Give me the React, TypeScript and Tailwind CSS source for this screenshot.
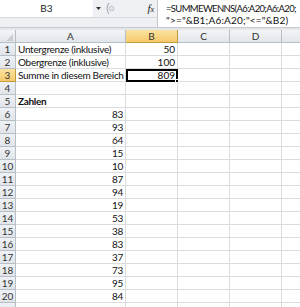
const values: [string, string, boolean?][] = [
  ['Untergrenze (inklusive)', '50'],
  ['Obergrenze (inklusive)', '100'],
  ['Summe in diesem Bereich', '809'],
  ['', ''],
  ['Zahlen', '', true],
  ['83', ''],
  ['93', ''],
  ['64', ''],
  ['15', ''],
  ['10', ''],
  ['87', ''],
  ['94', ''],
  ['19', ''],
  ['53', ''],
  ['38', ''],
  ['83', ''],
  ['37', ''],
  ['73', ''],
  ['95', ''],
  ['84', ''],
  ['', ''],
]

const cell = 'h-[13px] shrink-0 border-r border-b border-[#dadcdd] flex items-center px-[2px] overflow-visible whitespace-nowrap'

const FormulaBar = () => (
  <div className="flex h-[28px] border-b border-[#c5c9cf]">
    <div className="flex w-[157px] shrink-0 flex-col bg-[#eef0f3]">
      <div className="flex h-[17px] items-center">
        <div className="flex h-[17px] w-[93px] items-center justify-center bg-white text-[10px] text-[#222]">B3</div>
        <div className="flex w-[10px] justify-center">
          <svg width="5" height="3" viewBox="0 0 5 3"><path d="M0 0h5L2.5 3z" fill="#333" /></svg>
        </div>
        <svg width="16" height="13" viewBox="0 0 16 13" className="ml-[1px]">
          <path d="M5 1 Q1 6.5 5 12" stroke="#9aa0a8" fill="none" />
          <rect x="5" y="4" width="5" height="5" rx="2.5" fill="#dfe2e6" stroke="#b4b9bf" strokeWidth="0.7" />
        </svg>
        <div className="flex-1" />
        <div className="mr-[3px] font-['Liberation_Serif'] text-[11px] italic leading-none text-[#222]">
          f<span className="text-[8px]">x</span>
        </div>
      </div>
      <div className="flex-1 border-t border-[#d7dbe0]" />
    </div>
    <div className="min-w-0 flex-1 overflow-hidden whitespace-nowrap border-l border-[#c5c9cf] bg-white pl-[8px] pt-[3px] leading-[11.5px] text-[#111]">
      <div className="text-[9.5px] tracking-[-0.65px]">=SUMMEWENNS(A6:A20;A6:A20;</div>
      <div className="text-[10px] tracking-[0.2px]">"&gt;="&amp;B1;A6:A20;"&lt;="&amp;B2)</div>
    </div>
  </div>
)

const hdr = 'flex shrink-0 items-center justify-center border-r border-b border-[#b8bec6] bg-gradient-to-b from-[#f3f4f6] to-[#e2e5ea]'

const Header = () => (
  <div className="flex h-[13px] text-[10px] text-[#333]">
    <div className={`relative w-[16px] ${hdr}`}>
      <svg width="7" height="7" viewBox="0 0 7 7" className="absolute right-[2px] bottom-[1px]"><path d="M7 0V7H0z" fill="#c9cdd2" /></svg>
    </div>
    <div className={`w-[110px] ${hdr}`}>A</div>
    <div className="flex w-[52px] shrink-0 items-center justify-center border-r border-b border-[#c29b3c] bg-gradient-to-b from-[#fbe3a0] to-[#f5c96a]">B</div>
    <div className={`w-[52px] ${hdr}`}>C</div>
    <div className={`w-[52px] ${hdr}`}>D</div>
    <div className="flex-1 border-b border-[#b8bec6] bg-gradient-to-b from-[#f3f4f6] to-[#e2e5ea]" />
  </div>
)

export default function App() {
  return (
    <div className="h-[307px] w-[300px] overflow-hidden bg-white font-['Lato',sans-serif]">
      <FormulaBar />
      <div className="h-[2px] bg-[#e4e6e9]" />
      <Header />
      {values.map(([a, b, bold], i) => {
        const n = i + 1
        const sel = n === 3
        const isNum = /^\d+$/.test(a)
        return (
          <div key={n} className="flex text-[10px] text-[#111]">
            <div
              className={
                sel
                  ? 'flex h-[13px] w-[16px] shrink-0 items-center justify-center border-r border-b border-[#c29b3c] bg-gradient-to-b from-[#fbe3a0] to-[#f5c96a] text-[#333]'
                  : 'flex h-[13px] w-[16px] shrink-0 items-center justify-center border-r border-b border-[#b8bec6] bg-gradient-to-b from-[#eef1f5] to-[#e1e5ea] text-[#333]'
              }
            >
              {n < 21 ? n : ''}
            </div>
            <div className={`${cell} w-[110px] tracking-[-0.3px] ${isNum ? 'justify-end' : ''} ${bold ? 'font-bold' : ''}`}>{a}</div>
            {sel ? (
              <div className="relative flex h-[13px] w-[52px] shrink-0 items-center justify-end border-2 border-black px-[1px]">
                {b}
                <div className="absolute -right-[3px] -bottom-[3px] h-[4px] w-[4px] border border-white bg-black" />
              </div>
            ) : (
              <div className={`${cell} w-[52px] justify-end`}>{b}</div>
            )}
            <div className={`${cell} w-[52px]`} />
            <div className={`${cell} w-[52px]`} />
            <div className={`${cell} flex-1 border-r-0`} />
          </div>
        )
      })}
    </div>
  )
}
